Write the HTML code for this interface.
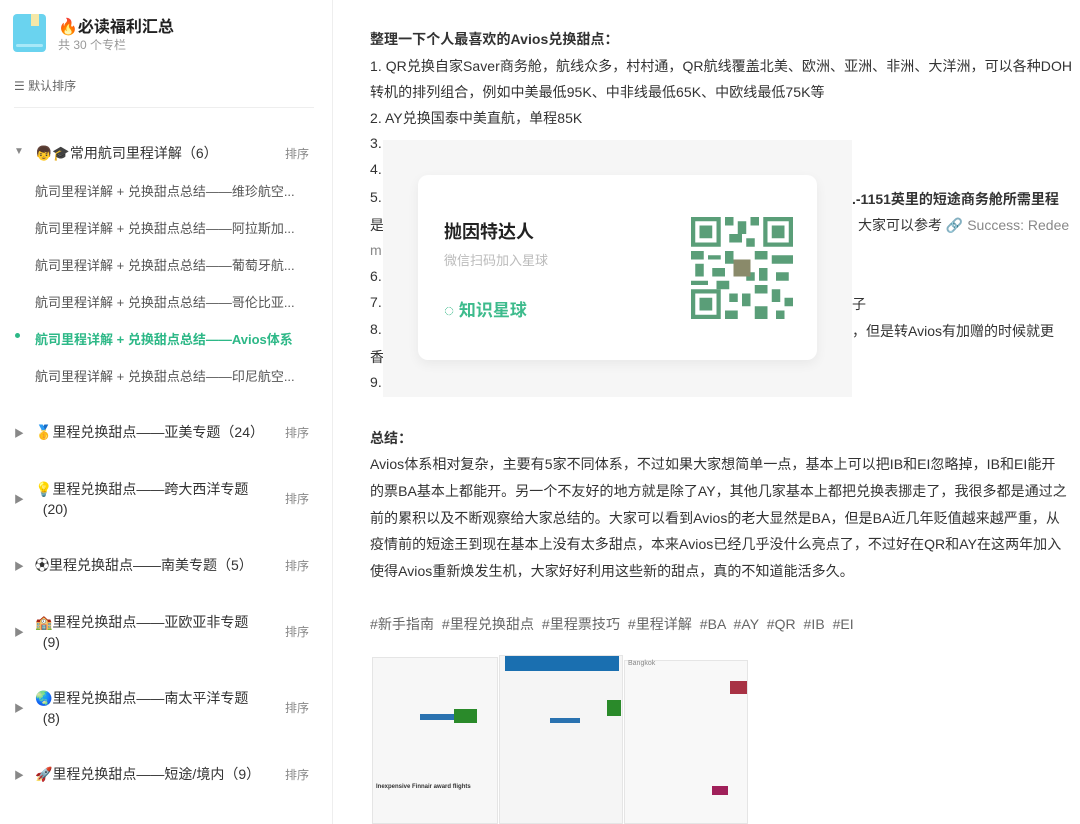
<!DOCTYPE html>
<html><head><meta charset="utf-8"><style>
*{margin:0;padding:0;box-sizing:border-box}
body{width:1080px;height:824px;overflow:hidden;background:#fff;font-family:"Liberation Sans","Noto Sans CJK SC",sans-serif;position:relative;color:#333}
.a{position:absolute;white-space:nowrap}
#side{position:absolute;left:0;top:0;width:333px;height:824px;border-right:1px solid #eee}
.g{font-size:14px;color:#333}
.s{font-size:13px;color:#555;left:35px}
.srt{font-size:12px;color:#888;left:285px}
.tri{font-size:10px;color:#888;left:14px}
.r{font-size:14px;color:#333;left:370px;letter-spacing:0.05px}
.tag{color:#666}
</style></head><body>
<div id="side">
<div class="a" style="left:13px;top:14px;width:33px;height:38px;background:#6ad3ef;border-radius:4px"></div>
<div class="a" style="left:31px;top:14px;width:8px;height:12px;background:#f5e8a8"></div>
<div class="a" style="left:16px;top:44px;width:27px;height:3px;background:#a8e8f8;border-radius:2px"></div>
<div class="a" style="left:58px;top:13px;font-size:16px;font-weight:bold;color:#222">🔥必读福利汇总</div>
<div class="a" style="left:58px;top:36px;font-size:12px;color:#999">共 30 个专栏</div>
<div class="a" style="left:14px;top:77px;font-size:12px;color:#666">☰ 默认排序</div>
<div class="a" style="left:14px;top:107px;width:300px;height:1px;background:#eee"></div>
<div class="a tri" style="top:146px">▼</div>
<div class="a g" style="left:35px;top:143px">👦🎓常用航司里程详解（6）</div><div class="a srt" style="top:145px">排序</div>
<div class="a s" style="top:181px">航司里程详解 + 兑换甜点总结——维珍航空...</div>
<div class="a s" style="top:218px">航司里程详解 + 兑换甜点总结——阿拉斯加...</div>
<div class="a s" style="top:255px">航司里程详解 + 兑换甜点总结——葡萄牙航...</div>
<div class="a s" style="top:292px">航司里程详解 + 兑换甜点总结——哥伦比亚...</div>
<div class="a" style="left:15px;top:333px;width:5px;height:5px;border-radius:50%;background:#2db887"></div>
<div class="a s" style="top:329px;color:#2db887;font-weight:bold">航司里程详解 + 兑换甜点总结——Avios体系</div>
<div class="a s" style="top:366px">航司里程详解 + 兑换甜点总结——印尼航空...</div>
<div class="a tri" style="top:425px">▶</div><div class="a g" style="left:35px;top:422px">🥇里程兑换甜点——亚美专题（24）</div><div class="a srt" style="top:424px">排序</div>
<div class="a tri" style="top:491px">▶</div><div class="a g" style="left:35px;top:479px;line-height:20px">💡里程兑换甜点——跨大西洋专题<br>&nbsp;&nbsp;(20)</div><div class="a srt" style="top:490px">排序</div>
<div class="a tri" style="top:558px">▶</div><div class="a g" style="left:35px;top:555px">⚽里程兑换甜点——南美专题（5）</div><div class="a srt" style="top:557px">排序</div>
<div class="a tri" style="top:624px">▶</div><div class="a g" style="left:35px;top:612px;line-height:20px">🏫里程兑换甜点——亚欧亚非专题<br>&nbsp;&nbsp;(9)</div><div class="a srt" style="top:623px">排序</div>
<div class="a tri" style="top:700px">▶</div><div class="a g" style="left:35px;top:688px;line-height:20px">🌏里程兑换甜点——南太平洋专题<br>&nbsp;&nbsp;(8)</div><div class="a srt" style="top:699px">排序</div>
<div class="a tri" style="top:767px">▶</div><div class="a g" style="left:35px;top:764px">🚀里程兑换甜点——短途/境内（9）</div><div class="a srt" style="top:766px">排序</div>
</div>
<div class="a r" style="top:29px;font-weight:bold">整理一下个人最喜欢的Avios兑换甜点：</div>
<div class="a r" style="top:56px">1. QR兑换自家Saver商务舱，航线众多，村村通，QR航线覆盖北美、欧洲、亚洲、非洲、大洋洲，可以各种DOH</div>
<div class="a r" style="top:82px">转机的排列组合，例如中美最低95K、中非线最低65K、中欧线最低75K等</div>
<div class="a r" style="top:108px">2. AY兑换国泰中美直航，单程85K</div>
<div class="a r" style="top:135px">3.</div><div class="a r" style="top:161px">4.</div>
<div class="a r" style="top:189px">5.</div><div class="a" style="left:852px;top:189px;font-size:14px;font-weight:bold">.-1151英里的短途商务舱所需里程</div>
<div class="a r" style="top:215px">是</div><div class="a" style="left:858px;top:215px;font-size:14px">大家可以参考 🔗 <span style="color:#888">Success: Redee</span></div>
<div class="a r" style="top:242px;color:#888">m</div>
<div class="a r" style="top:268px">6.</div><div class="a r" style="top:294px">7.</div><div class="a" style="left:852px;top:294px;font-size:14px">子</div>
<div class="a r" style="top:321px">8.</div><div class="a" style="left:852px;top:321px;font-size:14px">，但是转Avios有加赠的时候就更</div>
<div class="a r" style="top:347px">香</div><div class="a r" style="top:374px">9.</div>
<div class="a" style="left:383px;top:140px;width:469px;height:257px;background:#f6f6f6"></div>
<div class="a" style="left:418px;top:175px;width:399px;height:185px;background:#fff;border-radius:10px;box-shadow:0 4px 12px rgba(0,0,0,.06)"></div>
<div class="a" style="left:444px;top:218px;font-size:18px;font-weight:bold;color:#222">抛因特达人</div>
<div class="a" style="left:444px;top:250px;font-size:13px;color:#bbb">微信扫码加入星球</div>
<div class="a" style="left:444px;top:296px;font-size:17px;font-weight:bold;color:#3dbb8c">◌ 知识星球</div>
<svg class="a" style="left:691px;top:217px" width="102" height="102" viewBox="0 0 24 24" fill="#5a9e78">
<rect x="0" y="0" width="7" height="7"/><rect x="1" y="1" width="5" height="5" fill="#fff"/><rect x="2" y="2" width="3" height="3"/>
<rect x="17" y="0" width="7" height="7"/><rect x="18" y="1" width="5" height="5" fill="#fff"/><rect x="19" y="2" width="3" height="3"/>
<rect x="0" y="17" width="7" height="7"/><rect x="1" y="18" width="5" height="5" fill="#fff"/><rect x="2" y="19" width="3" height="3"/>
<path d="M8 0h2v2h-2zM11 1h2v3h-2zM14 0h2v2h-2zM9 4h3v2h-3zM13 5h2v2h-2zM0 8h3v2h-3zM4 9h3v1h-3zM8 8h2v3h-2zM15 8h3v2h-3zM19 9h5v2h-5zM1 11h2v3h-2zM5 12h3v2h-3zM16 12h2v3h-2zM20 13h3v2h-3zM0 15h4v1h-4zM6 15h3v2h-3zM15 16h3v2h-3zM19 17h2v3h-2zM9 18h2v2h-2zM12 18h2v3h-2zM22 19h2v2h-2zM8 22h3v2h-3zM15 21h3v3h-3zM20 22h2v2h-2zM13 13h2v2h-2z"/>
<rect x="10" y="10" width="4" height="4" fill="#8a8a6a"/></svg>
<div class="a r" style="top:428px;font-weight:bold">总结：</div>
<div class="a r" style="top:454px">Avios体系相对复杂，主要有5家不同体系，不过如果大家想简单一点，基本上可以把IB和EI忽略掉，IB和EI能开</div>
<div class="a r" style="top:481px">的票BA基本上都能开。另一个不友好的地方就是除了AY，其他几家基本上都把兑换表挪走了，我很多都是通过之</div>
<div class="a r" style="top:508px">前的累积以及不断观察给大家总结的。大家可以看到Avios的老大显然是BA，但是BA近几年贬值越来越严重，从</div>
<div class="a r" style="top:534px">疫情前的短途王到现在基本上没有太多甜点，本来Avios已经几乎没什么亮点了，不过好在QR和AY在这两年加入</div>
<div class="a r" style="top:561px">使得Avios重新焕发生机，大家好好利用这些新的甜点，真的不知道能活多久。</div>
<div class="a r tag" style="top:614px">#新手指南 &nbsp;#里程兑换甜点 &nbsp;#里程票技巧 &nbsp;#里程详解 &nbsp;#BA &nbsp;#AY &nbsp;#QR &nbsp;#IB &nbsp;#EI</div>
<div class="a" style="left:372px;top:657px;width:126px;height:167px;background:#f7f7f7;border:1px solid #e5e5e5"></div>
<div class="a" style="left:454px;top:709px;width:23px;height:14px;background:#2a8a2a"></div>
<div class="a" style="left:420px;top:714px;width:34px;height:6px;background:#2a72b0"></div>
<div class="a" style="left:376px;top:784px;font-size:6px;font-weight:bold;color:#333">Inexpensive Finnair award flights</div>
<div class="a" style="left:499px;top:655px;width:124px;height:169px;background:#f5f5f5;border:1px solid #e5e5e5"></div>
<div class="a" style="left:505px;top:656px;width:114px;height:15px;background:#1a6fb0"></div>
<div class="a" style="left:607px;top:700px;width:14px;height:16px;background:#2a8a2a"></div>
<div class="a" style="left:550px;top:718px;width:30px;height:5px;background:#2a72b0"></div>
<div class="a" style="left:624px;top:660px;width:124px;height:164px;background:#f8f8f8;border:1px solid #e5e5e5"></div>
<div class="a" style="left:628px;top:660px;font-size:7px;color:#888">Bangkok</div>
<div class="a" style="left:730px;top:681px;width:17px;height:13px;background:#a83244"></div>
<div class="a" style="left:712px;top:786px;width:16px;height:9px;background:#a0205a"></div>
</body></html>
